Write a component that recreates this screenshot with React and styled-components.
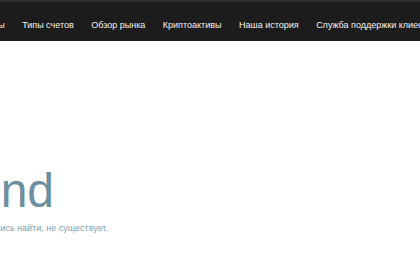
import styled, { createGlobalStyle } from 'styled-components';

const GlobalStyle = createGlobalStyle`
  html, body {
    margin: 0;
    padding: 0;
    background: #ffffff;
    overflow: hidden;
  }
  body {
    font-family: 'Liberation Sans', Arial, sans-serif;
  }
`;

const links = [
  'Инструменты',
  'Типы счетов',
  'Обзор рынка',
  'Криптоактивы',
  'Наша история',
  'Служба поддержки клиентов',
];

const App = () => {
  return (
    <>
      <GlobalStyle />
      <Header>
        <Nav>
          {links.map((link) => (
            <NavLink key={link} href="#">
              {link}
            </NavLink>
          ))}
        </Nav>
      </Header>
      <Main>
        <Heading>Not Found</Heading>
        <Message>
          Извините! К сожалению, страница, которую вы пытались найти, не существует.
        </Message>
      </Main>
    </>
  );
};

export default App;

const Header = styled.header`
  height: 41px;
  background: #1c1c1c;
  border-top: 2px solid #2e2e2e;
  box-sizing: border-box;
  display: flex;
  align-items: center;
  overflow: hidden;
`;

const Nav = styled.nav`
  display: flex;
  align-items: center;
  gap: 17.5px;
  margin-left: -51.5px;
  padding-top: 6px;
  white-space: nowrap;
`;

const NavLink = styled.a`
  color: #f2f2f2;
  font-size: 9px;
  text-decoration: none;
`;

const Main = styled.main`
  width: 600px;
  margin-left: -358px;
  padding-top: 126px;
  text-align: center;
`;

const Heading = styled.h1`
  margin: 0;
  font-size: 48px;
  font-weight: 400;
  line-height: 48px;
  color: #6b8f9f;
`;

const Message = styled.p`
  margin: 8px 0 0;
  font-size: 9px;
  color: #7f9fae;
`;
